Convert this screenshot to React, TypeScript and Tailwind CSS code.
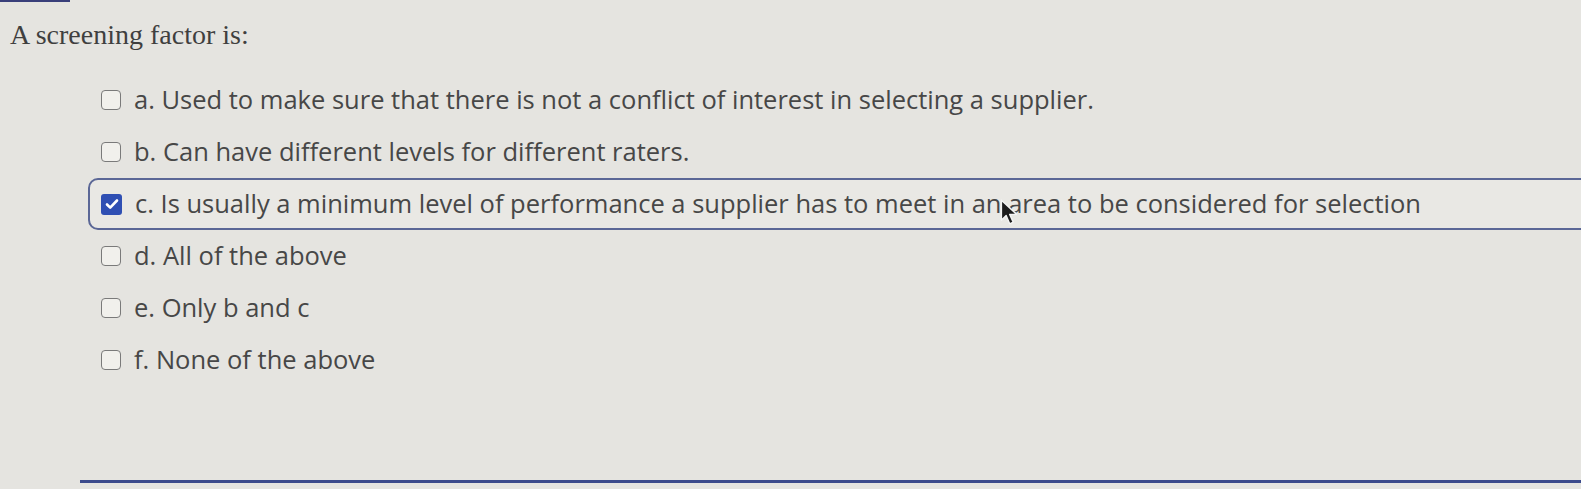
import React from 'react';

interface Choice {
  id: string;
  label: string;
}

const CHOICES: Choice[] = [
  { id: 'a', label: 'a. Used to make sure that there is not a conflict of interest in selecting a supplier.' },
  { id: 'b', label: 'b. Can have different levels for different raters.' },
  { id: 'c', label: 'c. Is usually a minimum level of performance a supplier has to meet in an area to be considered for selection' },
  { id: 'd', label: 'd. All of the above' },
  { id: 'e', label: 'e. Only b and c' },
  { id: 'f', label: 'f. None of the above' },
];

const Checkbox = ({ checked }: { checked: boolean }) =>
  checked ? (
    <span className="flex h-[21px] w-[21px] shrink-0 items-center justify-center rounded-[3px] bg-[#2f4fb3]">
      <svg viewBox="0 0 16 16" className="h-[16px] w-[16px]">
        <path d="M3 8.5l3.2 3.2L13 4.5" fill="none" stroke="#fff" strokeWidth="2.6" strokeLinecap="round" strokeLinejoin="round" />
      </svg>
    </span>
  ) : (
    <span className="block h-[20px] w-[20px] shrink-0 rounded-[4px] border-[1.5px] border-[#7a7a7a] bg-[#f1f0ec]" />
  );

// plain arrow pointer sitting over the selected row
const Pointer = () => (
  <svg viewBox="0 0 14 22" className="absolute left-[1000px] top-[199px] h-[26px] w-[17px]">
    <path d="M1 1v17l4-4 3 7 3-1.4-3-6.6h6z" fill="#1d1d1d" stroke="#f4f4f4" strokeWidth="1.2" strokeLinejoin="round" />
  </svg>
);

export default function App() {
  const selected = 'c';

  return (
    <div className="relative h-[489px] w-[1581px] overflow-hidden bg-[#e5e4e0] font-['Open_Sans',sans-serif] text-[#474747]">
      <div className="h-[2px] w-[70px] bg-[#3a3f7a]" />

      <h2 className="pl-[10px] pt-[17px] font-['Liberation_Serif',serif] text-[28px] leading-[32px] text-[#3f3f3f]">
        A screening factor is:
      </h2>

      <ul className="mr-[-40px] ml-[88px] mt-[23px] flex flex-col">
        {CHOICES.map(choice => {
          const isOn = choice.id === selected;
          return (
            <li
              key={choice.id}
              className={`flex h-[52px] items-center gap-[13px] rounded-l-[10px] border-2 pl-[11px] ${
                isOn ? 'border-[#5b6796] bg-[#e9e8e4]' : 'border-transparent'
              }`}
            >
              <Checkbox checked={isOn} />
              <span className="whitespace-nowrap text-[25.5px] leading-none">{choice.label}</span>
            </li>
          );
        })}
      </ul>

      <div className="ml-[80px] mt-[94px] h-[3px] bg-[#3c4b8c]" />

      <Pointer />
    </div>
  );
}
